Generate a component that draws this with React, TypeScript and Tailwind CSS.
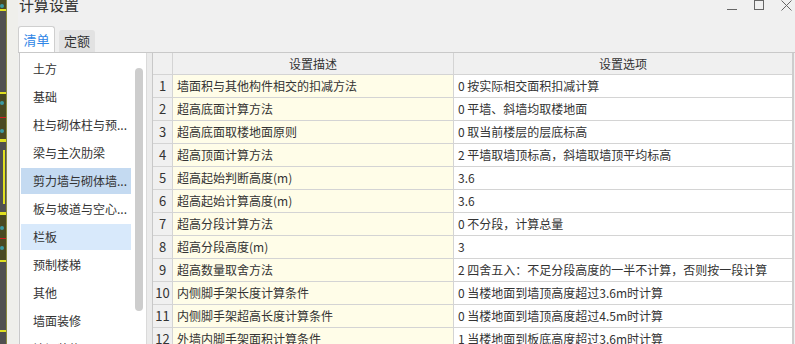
import { useState } from 'react'

const categories = [
  '土方',
  '基础',
  '柱与砌体柱与预...',
  '梁与主次肋梁',
  '剪力墙与砌体墙...',
  '板与坡道与空心...',
  '栏板',
  '预制楼梯',
  '其他',
  '墙面装修',
  '墙裙装修',
]

const rows: [string, string][] = [
  ['墙面积与其他构件相交的扣减方法', '0 按实际相交面积扣减计算'],
  ['超高底面计算方法', '0 平墙、斜墙均取楼地面'],
  ['超高底面取楼地面原则', '0 取当前楼层的层底标高'],
  ['超高顶面计算方法', '2 平墙取墙顶标高，斜墙取墙顶平均标高'],
  ['超高起始判断高度(m)', '3.6'],
  ['超高起始计算高度(m)', '3.6'],
  ['超高分段计算方法', '0 不分段，计算总量'],
  ['超高分段高度(m)', '3'],
  ['超高数量取舍方法', '2 四舍五入：不足分段高度的一半不计算，否则按一段计算'],
  ['内侧脚手架长度计算条件', '0 当楼地面到墙顶高度超过3.6m时计算'],
  ['内侧脚手架超高长度计算条件', '0 当楼地面到墙顶高度超过4.5m时计算'],
  ['外墙内脚手架面积计算条件', '1 当楼地面到板底高度超过3.6m时计算'],
]

// bit of the CAD drawing peeking out behind the dialog
function CadStrip() {
  return (
    <svg width="7" height="344" className="shrink-0">
      <rect width="7" height="344" fill="#505050" />
      <rect x="0" y="0" width="6" height="9" fill="#4a4a22" />
      <rect x="0" y="9" width="6" height="2" fill="#e0e020" />
      <rect x="0" y="92" width="6" height="2" fill="#e0e020" />
      <rect x="0" y="94" width="6" height="47" fill="#4a4a22" />
      <rect x="0" y="139" width="6" height="3" fill="#e0e020" />
      <rect x="3" y="150" width="2" height="54" fill="#e0e020" />
      <rect x="0" y="212" width="6" height="3" fill="#e0e020" />
      <rect x="0" y="215" width="6" height="46" fill="#4a4a22" />
      <rect x="0" y="260" width="6" height="2" fill="#e0e020" />
      <rect x="0" y="330" width="6" height="2" fill="#e0e020" />
      <rect x="0" y="117" width="6" height="1" fill="#d02020" />
      <rect x="0" y="238" width="6" height="1" fill="#d02020" />
      <circle cx="2" cy="6" r="2" fill="#3a9aa2" />
      <circle cx="2" cy="103" r="2" fill="#3a9aa2" />
      <circle cx="2" cy="131" r="2" fill="#3a9aa2" />
      <circle cx="2" cy="228" r="2" fill="#3a9aa2" />
      <circle cx="2" cy="248" r="2" fill="#3a9aa2" />
      <rect x="6" y="0" width="1" height="344" fill="#8a8a40" />
    </svg>
  )
}

export default function App() {
  const [tab, setTab] = useState<'qd' | 'de'>('qd')
  const [selected, setSelected] = useState(4)
  const hovered = 6

  return (
    <div
      className="flex h-[344px] w-[795px] overflow-hidden bg-[#f0f0f0] text-[12px] text-[#333]"
      style={{ fontFamily: '"Noto Sans CJK SC", "Microsoft YaHei", sans-serif' }}
    >
      <CadStrip />
      <div className="flex min-w-0 flex-1 flex-col bg-[#efefeb] pl-[11px]">
        {/* title bar */}
        <div className="flex h-[24px] shrink-0 items-start justify-between bg-[#f0f0f0]">
          <div className="-mt-[3px] pl-[1px] text-[15px] leading-[15px] text-[#333]">计算设置</div>
          <div className="flex items-start gap-[17px] pr-[3px] text-[#666]">
            <svg width="10" height="12">
              <path d="M0 9.5H10" stroke="currentColor" strokeWidth="1" />
            </svg>
            <svg width="10" height="11">
              <rect x="0.5" y="0.5" width="9" height="9" fill="none" stroke="currentColor" strokeWidth="1" />
            </svg>
            <svg width="11" height="11">
              <path d="M0.5 0.5L10.5 10.5M10.5 0.5L0.5 10.5" stroke="currentColor" strokeWidth="1" />
            </svg>
          </div>
        </div>

        {/* tabs */}
        <div className="flex h-[28px] shrink-0 items-end gap-[4px] bg-[#f0f0f0]">
          <button
            onClick={() => setTab('qd')}
            className={`h-[26px] w-[37px] rounded-t-[3px] border border-b-0 border-[#cfcfcf] text-[13px] ${
              tab === 'qd' ? 'bg-white text-[#2e86e6]' : 'bg-[#e3e3e3] text-[#333]'
            }`}
          >
            清单
          </button>
          <button
            onClick={() => setTab('de')}
            className={`h-[22px] w-[36px] rounded-t-[3px] text-[13px] ${
              tab === 'de' ? 'border border-b-0 border-[#cfcfcf] bg-white text-[#2e86e6]' : 'bg-[#e2e2e2] text-[#333]'
            }`}
          >
            定额
          </button>
        </div>

        {/* content */}
        <div className="flex min-h-0 flex-1 border-t border-[#c9c9c9] bg-[#f0f0f0] pl-[1px]">
          <div className="relative w-[128px] shrink-0 border-x border-l-[#c9c9c9] border-r-[#dadada] bg-white pt-[3px]">
            {categories.map((c, i) => (
              <div
                key={c}
                onClick={() => setSelected(i)}
                className={`mb-[2px] ml-[1px] flex h-[26px] w-[110px] items-center pl-[12px] text-[12px] ${
                  i === selected ? 'bg-[#c4daf1]' : i === hovered ? 'bg-[#d8e9fb]' : ''
                }`}
              >
                <span className="whitespace-nowrap">{c}</span>
              </div>
            ))}
            <div className="absolute left-[115px] top-[15px] h-[243px] w-[8px] rounded-full bg-[#cdcdcd]" />
          </div>

          <div className="w-[5px] shrink-0 bg-[#ebebeb]" />

          <div className="w-[642px] shrink-0 border-l border-r-2 border-l-[#c8c8c8] border-r-[#cdcdcd] bg-white">
            <div className="flex h-[22px] border-b border-[#d4d4d4] bg-[#f0f0f0]">
              <div className="w-[20px] border-r border-[#d4d4d4]" />
              <div className="flex w-[281px] items-center justify-center border-r border-[#d4d4d4]">设置描述</div>
              <div className="flex w-[338px] items-center justify-center">设置选项</div>
            </div>
            {rows.map(([desc, opt], i) => (
              <div key={i} className="flex h-[23px] border-b border-[#d4d4d4]">
                <div className="flex w-[20px] items-center justify-center border-r border-[#d4d4d4] bg-[#f0f0f0] text-[13px]">
                  {i + 1}
                </div>
                <div className="flex w-[281px] items-center border-r border-[#d4d4d4] bg-[#fffde8] pl-[4px] whitespace-nowrap">
                  {desc}
                </div>
                <div className="flex w-[338px] items-center pl-[4px] whitespace-nowrap">{opt}</div>
              </div>
            ))}
          </div>
        </div>
      </div>
    </div>
  )
}
